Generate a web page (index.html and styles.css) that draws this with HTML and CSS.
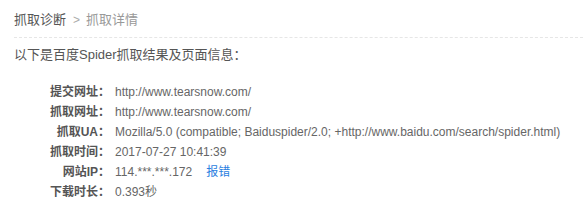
FILE: index.html
```html
<!DOCTYPE html>
<html>
<head>
<meta charset="utf-8">
<link rel="stylesheet" href="styles.css">
</head>
<body>
<div class="page">
  <div class="crumb"><span class="crumb-home">抓取诊断</span><span class="crumb-sep">&gt;</span><span class="crumb-cur">抓取详情</span></div>
  <p class="intro">以下是百度Spider抓取结果及页面信息：</p>
  <div class="info">
    <div class="label">提交网址：</div><div class="value">http://www.tearsnow.com/</div>
    <div class="label">抓取网址：</div><div class="value">http://www.tearsnow.com/</div>
    <div class="label">抓取UA：</div><div class="value">Mozilla/5.0 (compatible; Baiduspider/2.0; +http://www.baidu.com/search/spider.html)</div>
    <div class="label">抓取时间：</div><div class="value">2017-07-27 10:41:39</div>
    <div class="label">网站IP：</div><div class="value">114.***.***.172<a class="report" href="#">报错</a></div>
    <div class="label">下载时长：</div><div class="value">0.393秒</div>
  </div>
</div>
</body>
</html>
```
FILE: styles.css
```css
html, body {
  margin: 0;
  padding: 0;
  background: #fff;
}
body {
  font-family: "Liberation Sans", Arial, "Noto Sans CJK SC", sans-serif;
  font-size: 12px;
  color: #666;
}
.page {
  padding-left: 14px;
}
.crumb {
  padding-top: 10px;
  padding-bottom: 7px;
  line-height: 20px;
  font-size: 13px;
  border-bottom: 1px dashed #e6e6e6;
  display: flex;
  align-items: center;
}
.crumb-home {
  color: #555;
}
.crumb-sep {
  color: #aaa;
  margin: 0 6px 0 7px;
  font-size: 12px;
}
.crumb-cur {
  color: #999;
}
.intro {
  margin: 7px 0 0;
  line-height: 20px;
  font-size: 13px;
  color: #555;
}
.info {
  margin-top: 17px;
  display: grid;
  grid-template-columns: 96px 1fr;
  column-gap: 5px;
  line-height: 20px;
}
.label {
  text-align: right;
  font-weight: bold;
  color: #555;
  white-space: nowrap;
}
.value {
  color: #666;
  white-space: nowrap;
}
.report {
  color: #2a7ee0;
  text-decoration: none;
  margin-left: 14px;
}
```
